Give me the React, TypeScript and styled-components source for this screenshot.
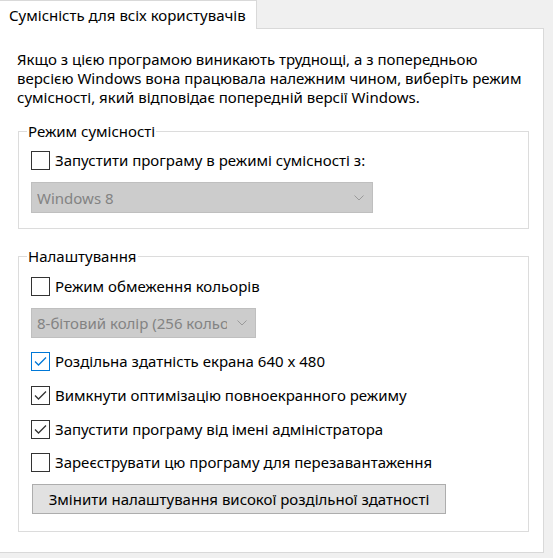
import React from "react";
import styled, { createGlobalStyle } from "styled-components";

const Global = createGlobalStyle`
  html, body { margin: 0; padding: 0; background: #f0f0f0; }
  body { font-family: "Noto Sans", "Open Sans", sans-serif; font-size: 15px; color: #000; }
`;

const Window = styled.div`
  width: 553px;
  height: 558px;
  background: #f0f0f0;
  overflow: hidden;
  display: flex;
  flex-direction: column;
`;

const TabStrip = styled.div`
  height: 29px;
  display: flex;
  align-items: flex-end;
  position: relative;
  z-index: 1;
`;

const Tab = styled.div`
  margin-left: -1px;
  width: 258px;
  height: 29px;
  box-sizing: border-box;
  border: 1px solid #d9d9d9;
  border-bottom: none;
  background: #fff;
  padding-left: 9px;
  display: flex;
  align-items: center;
  white-space: nowrap;
`;

const Panel = styled.div`
  margin-left: -1px;
  margin-top: -1px;
  width: 545px;
  height: 525px;
  box-sizing: border-box;
  border: 1px solid #d9d9d9;
  background: #fff;
  padding: 0 0 0 18px;
  display: flex;
  flex-direction: column;
`;

const Intro = styled.p`
  margin: 21px 0 0 -1px;
  line-height: 19px;
  width: 515px;
`;

const Group = styled.fieldset<{ $top: number; $pt: number; $pb: number }>`
  margin: ${(p) => p.$top}px 0 0 0;
  width: 511px;
  box-sizing: border-box;
  border: 1px solid #dcdcdc;
  padding: ${(p) => p.$pt}px 12px ${(p) => p.$pb}px 12px;
  display: flex;
  flex-direction: column;
  align-items: flex-start;
  min-width: 0;
`;

const Legend = styled.legend`
  padding: 0 1px;
  margin-left: -4px;
  line-height: 20px;
`;

const Row = styled.label<{ $mt?: number }>`
  display: flex;
  align-items: center;
  height: 20px;
  margin-top: ${(p) => p.$mt ?? 0}px;
  white-space: nowrap;
  cursor: default;
`;

const Box = styled.span<{ $focus?: boolean }>`
  width: 19px;
  height: 19px;
  box-sizing: border-box;
  border: 1px solid ${(p) => (p.$focus ? "#0078d7" : "#333333")};
  background: #fff;
  margin-right: 5px;
  display: flex;
  align-items: center;
  justify-content: center;
  flex-shrink: 0;
`;

const Select = styled.div<{ $w: number; $h: number; $mt: number }>`
  width: ${(p) => p.$w}px;
  height: ${(p) => p.$h}px;
  margin-top: ${(p) => p.$mt}px;
  box-sizing: border-box;
  background: #cccccc;
  border: 1px solid #bfbfbf;
  display: flex;
  align-items: center;
  padding: 0 8px 0 5px;
  color: #838383;
  white-space: nowrap;
`;

const SelectText = styled.span`
  flex: 1;
  overflow: hidden;
`;

const Chevron = styled.svg`
  margin-left: 10px;
  flex-shrink: 0;
`;

const Button = styled.button`
  margin-top: 12px;
  width: 414px;
  height: 30px;
  margin-left: 1px;
  background: #e1e1e1;
  border: 1px solid #adadad;
  font: inherit;
  color: #000;
  padding: 0;
  white-space: nowrap;
`;

function Check({ on, focus }: { on?: boolean; focus?: boolean }) {
  return (
    <Box $focus={focus}>
      {on && (
        <svg width="13" height="11" viewBox="0 0 13 11">
          <polyline
            points="1,5.5 4.5,9 12,1.5"
            fill="none"
            stroke={focus ? "#0078d7" : "#333"}
            strokeWidth="1.3"
          />
        </svg>
      )}
    </Box>
  );
}

function Drop({ text, w, h, mt }: { text: string; w: number; h: number; mt: number }) {
  return (
    <Select $w={w} $h={h} $mt={mt}>
      <SelectText>{text}</SelectText>
      <Chevron width="10" height="6" viewBox="0 0 10 6">
        <polyline points="0.5,0.5 5,5 9.5,0.5" fill="none" stroke="#9a9a9a" strokeWidth="1" />
      </Chevron>
    </Select>
  );
}

export default function App() {
  return (
    <>
      <Global />
      <Window>
        <TabStrip>
          <Tab>Сумісність для всіх користувачів</Tab>
        </TabStrip>
        <Panel>
          <Intro>
            Якщо з цією програмою виникають труднощі, а з попередньою версією Windows вона
            працювала належним чином, виберіть режим сумісності, який відповідає попередній
            версії Windows.
          </Intro>
          <Group $top={14} $pt={9} $pb={15}>
            <Legend>Режим сумісності</Legend>
            <Row>
              <Check />
              Запустити програму в режимі сумісності з:
            </Row>
            <Drop text="Windows 8" w={342} h={31} mt={12} />
          </Group>
          <Group $top={17} $pt={10} $pb={17}>
            <Legend>Налаштування</Legend>
            <Row>
              <Check />
              Режим обмеження кольорів
            </Row>
            <Drop text="8-бітовий колір (256 кольорів)" w={225} h={30} mt={12} />
            <Row $mt={13}>
              <Check on focus />
              Роздільна здатність екрана 640 x 480
            </Row>
            <Row $mt={14}>
              <Check on />
              Вимкнути оптимізацію повноекранного режиму
            </Row>
            <Row $mt={14}>
              <Check on />
              Запустити програму від імені адміністратора
            </Row>
            <Row $mt={13}>
              <Check />
              Зареєструвати цю програму для перезавантаження
            </Row>
            <Button>Змінити налаштування високої роздільної здатності</Button>
          </Group>
        </Panel>
      </Window>
    </>
  );
}
